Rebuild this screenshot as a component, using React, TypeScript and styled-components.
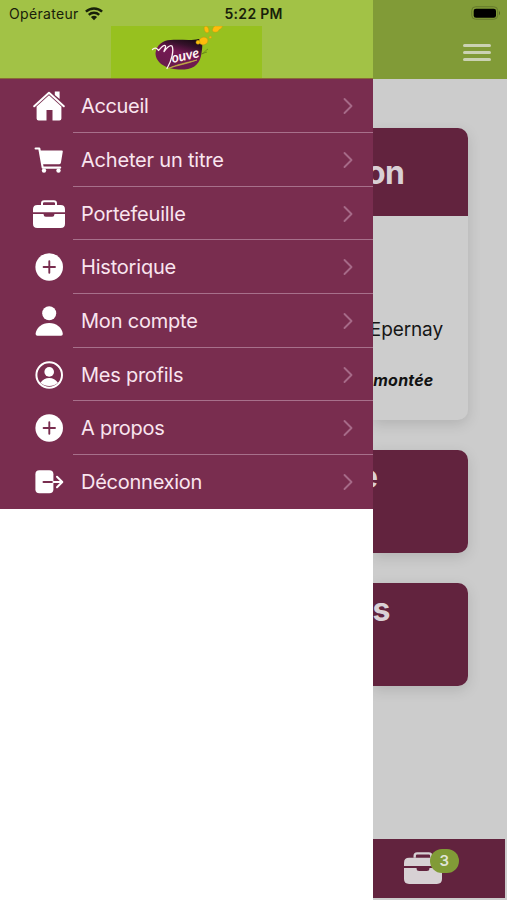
import React from 'react';
import styled, { createGlobalStyle } from 'styled-components';

const Global = createGlobalStyle`
  * { box-sizing: border-box; }
  body { margin: 0; background: #fff; font-family: Inter, "Liberation Sans", sans-serif; }
  svg { display: block; flex: none; }
`;

const Screen = styled.div`
  display: grid;
  grid-template-columns: 372.5px 1fr;
  width: 507px;
  height: 900px;
  overflow: hidden;
`;

const Drawer = styled.aside`
  display: flex;
  flex-direction: column;
  background: #fff;
  min-width: 0;
`;

const DrawerHeader = styled.header`
  height: 79.3px;
  background: #a2c246;
  border-bottom: 1px solid #8a6a37;
  display: flex;
  flex-direction: column;
`;

const StatusBar = styled.div`
  height: 26px;
  display: grid;
  grid-template-columns: 84.5px 140px 1fr;
  align-items: center;
  padding-top: 1px;
  color: #18200a;
`;

const Carrier = styled.span`
  padding-left: 9px;
  font-size: 14px;
  letter-spacing: 0.32px;
  white-space: nowrap;
`;

const Clock = styled.span`
  font-size: 14px;
  font-weight: 600;
  letter-spacing: 0.3px;
  white-space: nowrap;
`;

const LogoBand = styled.div`
  width: 151px;
  height: 52px;
  margin-left: 111px;
  background: #97c11f;
`;

const Menu = styled.nav`
  display: flex;
  flex-direction: column;
  background: #792d4f;
`;

const MenuItem = styled.a`
  display: grid;
  grid-template-columns: 73px 1fr;
  height: 53.7px;
  color: #f9e5ef;
`;

const IconSlot = styled.span`
  display: flex;
  align-items: center;
  padding-left: 33px;
  color: #fff;
`;

const ItemBody = styled.span<{ $last: boolean }>`
  display: flex;
  align-items: center;
  justify-content: space-between;
  padding: 1px 19px 0 8px;
  border-bottom: 1px solid ${(p) => (p.$last ? 'transparent' : '#a7708b')};
`;

const Label = styled.span<{ $spacing: number }>`
  font-size: 20px;
  line-height: 24px;
  letter-spacing: ${(p) => p.$spacing}px;
  white-space: nowrap;
`;

const Page = styled.main`
  display: flex;
  flex-direction: column;
  background: #cccccc;
  min-width: 0;
  overflow: hidden;
`;

const PageHeader = styled.header`
  height: 79px;
  flex: none;
  background: #819b37;
  display: flex;
  flex-direction: column;
  align-items: flex-end;
  padding: 6px 6px 0 0;
  gap: 24px;
`;

const MenuButton = styled.div`
  display: flex;
  flex-direction: column;
  gap: 4.4px;
  margin-right: 10px;
`;

const Bar = styled.i`
  width: 28px;
  height: 2.7px;
  border-radius: 2px;
  background: #cbd2b3;
`;

const Cards = styled.section`
  flex: 1;
  display: flex;
  flex-direction: column;
  gap: 29.6px;
  padding: 49px 39px 0 0;
`;

const Card = styled.article`
  height: 292px;
  border-radius: 0 10px 10px 0;
  background: #cdcdcd;
  box-shadow: 0 4px 14px rgba(0, 0, 0, 0.13);
  display: flex;
  flex-direction: column;
`;

const CardHead = styled.div`
  height: 88px;
  border-radius: 0 10px 0 0;
  background: #62233e;
  display: flex;
  align-items: center;
  padding-top: 1px;
`;

const Tile = styled.article`
  height: 103.5px;
  border-radius: 0 10px 10px 0;
  background: #62233e;
  box-shadow: 0 4px 14px rgba(0, 0, 0, 0.13);
  display: flex;
  padding-top: 7px;
`;

const Heading = styled.h2<{ $edge: number }>`
  display: flex;
  justify-content: flex-end;
  width: ${(p) => p.$edge}px;
  margin: 0;
  overflow: hidden;
  font-size: 32px;
  line-height: 40px;
  font-weight: 700;
  letter-spacing: -0.5px;
  color: #d9d0d5;
`;

const Place = styled.p`
  display: flex;
  justify-content: flex-end;
  width: 70.5px;
  margin: 102px 0 0;
  overflow: hidden;
  font-size: 19px;
  line-height: 24px;
  letter-spacing: -0.1px;
  color: #161616;
`;

const Note = styled.p`
  display: flex;
  justify-content: flex-end;
  width: 61px;
  margin: 28px 0 0;
  font-size: 16px;
  line-height: 20px;
  font-weight: 700;
  font-style: italic;
  letter-spacing: 0.2px;
  color: #121212;
`;

const Footer = styled.footer`
  height: 59px;
  flex: none;
  margin: 0 2.5px 2px 0;
  background: #62233e;
  display: flex;
  padding: 13px 0 0 31px;
`;

const Wallet = styled.div`
  position: relative;
  width: 38px;
  height: 32px;
  color: #d7d1d4;
`;

const Badge = styled.span`
  position: absolute;
  left: 26px;
  top: -3px;
  width: 29.5px;
  height: 24px;
  border-radius: 12px;
  background: #819b37;
  color: #e0e4d7;
  font-size: 15px;
  line-height: 24px;
  font-weight: 600;
  text-align: center;
`;

const Home = () => (
  <svg width="32" height="32" viewBox="0 0 32 32" fill="currentColor">
    <path d="M21.8 1.600h4.800v7.500l-4.800-4.200z" />
    <path d="M1.200 16.300 16 2.700l14.800 13.600" fill="none" stroke="currentColor" strokeWidth="2" strokeLinecap="round" strokeLinejoin="round" />
    <path d="M3.600 16.400 16 5.200l12.400 11.200v12.100q0 2-2 2h-6.900V20h-6v10.500H5.600q-2 0-2-2z" />
  </svg>
);

const Cart = () => (
  <svg width="32" height="32" viewBox="0 0 32 32" fill="currentColor">
    <path d="M2.600 4.500h3.700l3.400 19.100h17.500" fill="none" stroke="currentColor" strokeWidth="2.100" strokeLinecap="round" strokeLinejoin="round" />
    <path d="M7 6.400h21.800q1.200 0 1 1.200l-1.900 11.200q-.2 1.400-1.600 1.400H9.400z" />
    <circle cx="11" cy="26.600" r="2.200" /><circle cx="25.500" cy="26.600" r="2.200" />
  </svg>
);

const Briefcase = ({ width = 32, height = 28 }: { width?: number; height?: number }) => (
  <svg width={width} height={height} viewBox="0 0 32 28" preserveAspectRatio="none" fill="currentColor">
    <path d="M9 5V3.300Q9 1.200 11.100 1.200h9.800Q23 1.200 23 3.300V5" fill="none" stroke="currentColor" strokeWidth="2" />
    <path d="M4.300 5h23.400Q32 5 32 9.300v2.900H0V9.300Q0 5 4.300 5z" />
    <path d="M0 13.900h10.600v.6q0 2.200 2.200 2.200h6.400q2.200 0 2.200-2.200v-.6H32v9.800q0 4.300-4.300 4.300H4.300Q0 28 0 23.700z" />
  </svg>
);

const Plus = () => (
  <svg width="32" height="32" viewBox="0 0 32 32">
    <circle cx="16.200" cy="16" r="13.800" fill="currentColor" />
    <path d="M10.600 16h11.400M16.300 10.300v11.400" stroke="#792d4f" strokeWidth="1.900" strokeLinecap="round" />
  </svg>
);

const Person = () => (
  <svg width="32" height="32" viewBox="0 0 32 32" fill="currentColor">
    <circle cx="16.200" cy="8.200" r="7" />
    <path d="M4.400 30.800q-1.800 0-1.800-1.800c.4-6.200 6.500-11 13.600-11s13.200 4.800 13.600 11q0 1.800-1.800 1.800z" />
  </svg>
);

const Profile = () => (
  <svg width="32" height="32" viewBox="0 0 32 32" fill="currentColor">
    <circle cx="16.200" cy="16" r="12.800" fill="none" stroke="currentColor" strokeWidth="2" />
    <circle cx="16.200" cy="12.900" r="4.800" />
    <path d="M7.500 23.800c2-3.300 5.100-4.900 8.700-4.900s6.700 1.600 8.700 4.900a13.300 13.300 0 0 1-17.400 0z" />
  </svg>
);

const Logout = () => (
  <svg width="32" height="32" viewBox="0 0 32 32">
    <rect x="2.400" y="4.300" width="18" height="23" rx="4" fill="currentColor" />
    <path d="M10.500 16h10" stroke="#792d4f" strokeWidth="2" strokeLinecap="round" />
    <path d="M20.400 16h8.500M24 10.700l5.300 5.300-5.300 5.300" fill="none" stroke="currentColor" strokeWidth="2" strokeLinecap="round" strokeLinejoin="round" />
  </svg>
);

const Chevron = () => (
  <svg width="12" height="18" viewBox="0 0 12 18">
    <path d="m2.500 2 7 7-7 7" fill="none" stroke="#a66a88" strokeWidth="1.900" strokeLinecap="round" strokeLinejoin="round" />
  </svg>
);

const Wifi = () => (
  <svg width="18" height="14" viewBox="0 0 18 14" fill="none" stroke="currentColor" strokeWidth="2.400">
    <path d="M.9 4.700a11.700 11.700 0 0 1 16.200 0M3.800 7.900a7.500 7.500 0 0 1 10.400 0" />
    <path d="m5.900 10.100 3.100 3.200 3.100-3.200a4.600 4.600 0 0 0-6.200 0z" fill="currentColor" stroke="none" />
  </svg>
);

const Battery = () => (
  <svg width="30" height="14" viewBox="0 0 30 14">
    <rect x=".7" y=".7" width="26" height="12.600" rx="4" fill="none" stroke="#667a2c" />
    <rect x="2.700" y="2.700" width="22.300" height="9" rx="2.300" fill="#000" />
    <path d="M28 4.700q2 2.300 0 4.600z" fill="#526223" />
  </svg>
);

const Logo = () => (
  <svg width="151" height="52" viewBox="111 26 151 52">
    <defs>
      <linearGradient id="plum" x1=".8" y1="0" x2=".4" y2="1">
        <stop offset="0" stopColor="#180a13" />
        <stop offset=".22" stopColor="#35112a" />
        <stop offset=".48" stopColor="#741853" />
        <stop offset="1" stopColor="#681b4b" />
      </linearGradient>
    </defs>
    <path d="M155.500 53c1-8 7-12.500 15-13 10-.8 21 1 28-1 5 1 4 8 3 14-1 10-7 16-17 16.500-15 1-29-5-29-16.500z" fill="url(#plum)" />
    <path d="M202 54c2-1 4-4 6-5m-7 5 6-2" fill="none" stroke="#668518" strokeWidth=".8" />
    <g fill="#ffbc0b" stroke="#b79c14" strokeWidth=".5">
      <ellipse cx="203.500" cy="41" rx="4.500" ry="3.800" transform="rotate(-20 203.500 41)" />
      <circle cx="198" cy="42.300" r="2" />
      <ellipse cx="206.500" cy="29.500" rx="2.200" ry="3.500" transform="rotate(-18 206.500 29.500)" />
      <path d="M212.500 29.500c1-3 2-4 4-3.500h6c0 3-4 3-4 5-2 2-7 1.500-6-1.500z" />
      <circle cx="210.300" cy="37.300" r="1.200" />
    </g>
    <path d="M152.500 49.500c2-2 4-2 6 1 3-3 5-6 6.500-5 2 1-1 4-1 6 3-4 6-7 8-5.500 2 4 0 14-5 22.500" fill="none" stroke="#fff4f4" strokeWidth="1.300" strokeLinecap="round" strokeLinejoin="round" />
    <path d="M168 68.500c9-4 17-5.500 29-8.500-10 4-19 5-29 8.500z" fill="#c3af45" stroke="#c3af45" strokeWidth=".7" />
    <text x="172.500" y="63" transform="rotate(-12 172.500 63)" fill="#fff4f4" fontFamily="Lato, sans-serif" fontStyle="italic" fontWeight="700" fontSize="14" textLength="28" lengthAdjust="spacingAndGlyphs">ouve</text>
  </svg>
);

const items = [
  { label: 'Accueil', icon: <Home />, spacing: -0.35 },
  { label: 'Acheter un titre', icon: <Cart />, spacing: -0.2 },
  { label: 'Portefeuille', icon: <Briefcase />, spacing: -0.2 },
  { label: 'Historique', icon: <Plus />, spacing: -0.2 },
  { label: 'Mon compte', icon: <Person />, spacing: -0.2 },
  { label: 'Mes profils', icon: <Profile />, spacing: -0.25 },
  { label: 'A propos', icon: <Plus />, spacing: -0.25 },
  { label: 'Déconnexion', icon: <Logout />, spacing: -0.25 },
];

export default function App() {
  return (
    <>
      <Global />
      <Screen>
        <Drawer>
          <DrawerHeader>
            <StatusBar>
              <Carrier>Opérateur</Carrier>
              <Wifi />
              <Clock>5:22 PM</Clock>
            </StatusBar>
            <LogoBand><Logo /></LogoBand>
          </DrawerHeader>
          <Menu>
            {items.map((item, i) => (
              <MenuItem key={item.label}>
                <IconSlot>{item.icon}</IconSlot>
                <ItemBody $last={i === items.length - 1}>
                  <Label $spacing={item.spacing}>{item.label}</Label>
                  <Chevron />
                </ItemBody>
              </MenuItem>
            ))}
          </Menu>
        </Drawer>
        <Page>
          <PageHeader>
            <Battery />
            <MenuButton><Bar /><Bar /><Bar /></MenuButton>
          </PageHeader>
          <Cards>
            <Card>
              <CardHead><Heading $edge={32}>on</Heading></CardHead>
              <Place>Epernay</Place>
              <Note>montée</Note>
            </Card>
            <Tile><Heading $edge={5}>e</Heading></Tile>
            <Tile><Heading $edge={17.5}>s</Heading></Tile>
          </Cards>
          <Footer>
            <Wallet>
              <Briefcase width={38} height={32} />
              <Badge>3</Badge>
            </Wallet>
          </Footer>
        </Page>
      </Screen>
    </>
  );
}
